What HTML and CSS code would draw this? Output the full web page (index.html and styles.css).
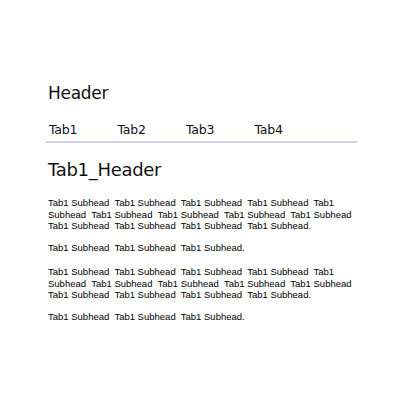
FILE: index.html
```html
<!DOCTYPE html>
<html>
<head>
<meta charset="utf-8">
<link rel="stylesheet" href="styles.css">
</head>
<body>
<div class="page">
  <h1 class="title">Header</h1>
  <nav class="tabs">
    <span class="tab">Tab1</span>
    <span class="tab">Tab2</span>
    <span class="tab">Tab3</span>
    <span class="tab">Tab4</span>
  </nav>
  <h2 class="section">Tab1_Header</h2>
  <p class="text">Tab1 Subhead&nbsp; Tab1 Subhead&nbsp; Tab1 Subhead&nbsp; Tab1 Subhead&nbsp; Tab1 Subhead&nbsp; Tab1 Subhead&nbsp; Tab1 Subhead&nbsp; Tab1 Subhead&nbsp; Tab1 Subhead&nbsp; Tab1 Subhead&nbsp; Tab1 Subhead&nbsp; Tab1 Subhead&nbsp; Tab1 Subhead.</p>
  <p class="text">Tab1 Subhead&nbsp; Tab1 Subhead&nbsp; Tab1 Subhead.</p>
  <p class="text gap">Tab1 Subhead&nbsp; Tab1 Subhead&nbsp; Tab1 Subhead&nbsp; Tab1 Subhead&nbsp; Tab1 Subhead&nbsp; Tab1 Subhead&nbsp; Tab1 Subhead&nbsp; Tab1 Subhead&nbsp; Tab1 Subhead&nbsp; Tab1 Subhead&nbsp; Tab1 Subhead&nbsp; Tab1 Subhead&nbsp; Tab1 Subhead.</p>
  <p class="text">Tab1 Subhead&nbsp; Tab1 Subhead&nbsp; Tab1 Subhead.</p>
</div>
</body>
</html>
```
FILE: styles.css
```css
html, body {
  margin: 0;
  padding: 0;
  background: #ffffff;
}
.page {
  margin: 0 0 0 46px;
  width: 311px;
  padding-top: 82px;
  color: #111111;
}
.title {
  margin: 0 0 0 2px;
  font-family: "DejaVu Sans", sans-serif;
  font-weight: normal;
  font-size: 17px;
  line-height: 22px;
  letter-spacing: -0.3px;
}
.tabs {
  display: flex;
  margin-top: 17px;
  padding: 0 0 3px 3px;
  border-bottom: 2px solid #d4d4e4;
}
.tab {
  width: 68.5px;
  font-family: "DejaVu Sans", sans-serif;
  font-size: 12.5px;
  line-height: 17px;
  letter-spacing: -0.2px;
}
.section {
  margin: 15px 0 0 2px;
  font-family: "DejaVu Sans", sans-serif;
  font-weight: normal;
  font-size: 18px;
  line-height: 24px;
  letter-spacing: -0.3px;
}
.text {
  margin: 15px 0 0 2px;
  font-family: "Liberation Sans", Arial, sans-serif;
  font-size: 9.5px;
  line-height: 11.5px;
  color: #000000;
}
.text + .text {
  margin-top: 10px;
}
.text + .gap {
  margin-top: 13px;
}
```
